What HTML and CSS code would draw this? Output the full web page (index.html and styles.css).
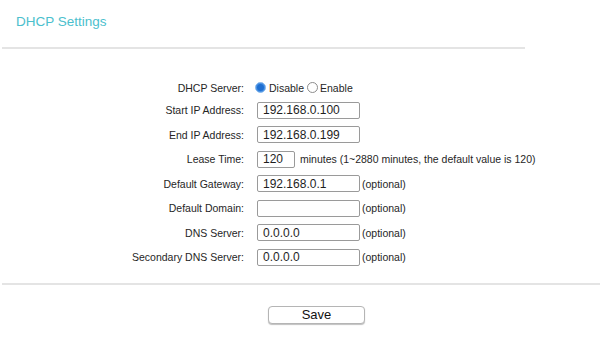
FILE: index.html
```html
<!DOCTYPE html>
<html lang="en">
<head>
<meta charset="utf-8">
<title>DHCP Settings</title>
<link rel="stylesheet" href="styles.css">
</head>
<body>
<div class="page">
  <h1 class="title">DHCP Settings</h1>
  <div class="rule rule-top"></div>
  <div class="form">
    <div class="row row-first">
      <span class="label">DHCP Server:</span>
      <span class="control">
        <label class="radio"><span class="dot checked"></span>Disable</label>
        <label class="radio"><span class="dot"></span>Enable</label>
      </span>
    </div>
    <div class="row">
      <span class="label">Start IP Address:</span>
      <span class="control"><span class="field">192.168.0.100</span></span>
    </div>
    <div class="row">
      <span class="label">End IP Address:</span>
      <span class="control"><span class="field">192.168.0.199</span></span>
    </div>
    <div class="row">
      <span class="label">Lease Time:</span>
      <span class="control"><span class="field field-short">120</span><span class="note note-wide">minutes (1~2880 minutes, the default value is 120)</span></span>
    </div>
    <div class="row">
      <span class="label">Default Gateway:</span>
      <span class="control"><span class="field">192.168.0.1</span><span class="note">(optional)</span></span>
    </div>
    <div class="row">
      <span class="label">Default Domain:</span>
      <span class="control"><span class="field"></span><span class="note">(optional)</span></span>
    </div>
    <div class="row">
      <span class="label">DNS Server:</span>
      <span class="control"><span class="field">0.0.0.0</span><span class="note">(optional)</span></span>
    </div>
    <div class="row">
      <span class="label">Secondary DNS Server:</span>
      <span class="control"><span class="field">0.0.0.0</span><span class="note">(optional)</span></span>
    </div>
  </div>
  <div class="rule rule-bottom"></div>
  <div class="actions">
    <button class="save" type="button">Save</button>
  </div>
</div>
</body>
</html>
```
FILE: styles.css
```css
html, body {
  margin: 0;
  padding: 0;
  background: #ffffff;
}
body {
  font-family: "Liberation Sans", Arial, sans-serif;
  width: 600px;
  height: 340px;
  overflow: hidden;
}
.page {
  display: flex;
  flex-direction: column;
}
.title {
  margin: 0;
  padding: 14px 0 0 16px;
  font-size: 13.5px;
  line-height: 16px;
  font-weight: normal;
  color: #4bc0cd;
}
.rule {
  height: 2px;
  background: #e4e4e4;
}
.rule-top {
  margin: 17px 0 0 2px;
  width: 523px;
}
.rule-bottom {
  margin: 13px 0 0 2px;
  width: 598px;
}
.form {
  margin-top: 28px;
  display: grid;
  grid-template-columns: 244px 1fr;
  grid-template-rows: 21px;
  grid-auto-rows: 24.5px;
}
.row {
  display: contents;
}
.label {
  display: flex;
  align-items: center;
  justify-content: flex-end;
  font-size: 10.5px;
  color: #262626;
}
.control {
  display: flex;
  align-items: center;
  padding-left: 13px;
  font-size: 10.5px;
  color: #262626;
}
.radio {
  display: flex;
  align-items: center;
}
.radio:first-child {
  margin-left: -2px;
}
.dot {
  box-sizing: border-box;
  width: 11px;
  height: 11px;
  border-radius: 50%;
  border: 1px solid #8c8c8c;
  margin-right: 2px;
  background: #fff;
}
.dot.checked {
  border: 1.5px solid #8fbff0;
  background: #1f6fd1;
  box-shadow: inset 0 0 0 1px #4a93e6;
  margin-right: 3px;
}
.radio + .radio {
  margin-left: 3px;
}
.field {
  box-sizing: border-box;
  display: inline-flex;
  align-items: center;
  width: 103px;
  height: 17px;
  border: 1px solid #9a9a9a;
  border-radius: 2px;
  padding-left: 5px;
  font-size: 12px;
  color: #1e1e1e;
  background: #fff;
}
.field-short {
  width: 38px;
}
.note {
  margin-left: 2px;
}
.note-wide {
  margin-left: 5px;
}
.actions {
  display: flex;
  padding: 21px 0 0 268px;
}
.save {
  box-sizing: border-box;
  width: 97px;
  height: 18px;
  border: 1px solid #b5b5b5;
  border-radius: 4px;
  background: #ffffff;
  box-shadow: 0 1px 1px rgba(0, 0, 0, 0.25);
  font-family: "Liberation Sans", Arial, sans-serif;
  font-size: 13px;
  color: #111111;
  padding: 0;
  line-height: 16px;
}
```
